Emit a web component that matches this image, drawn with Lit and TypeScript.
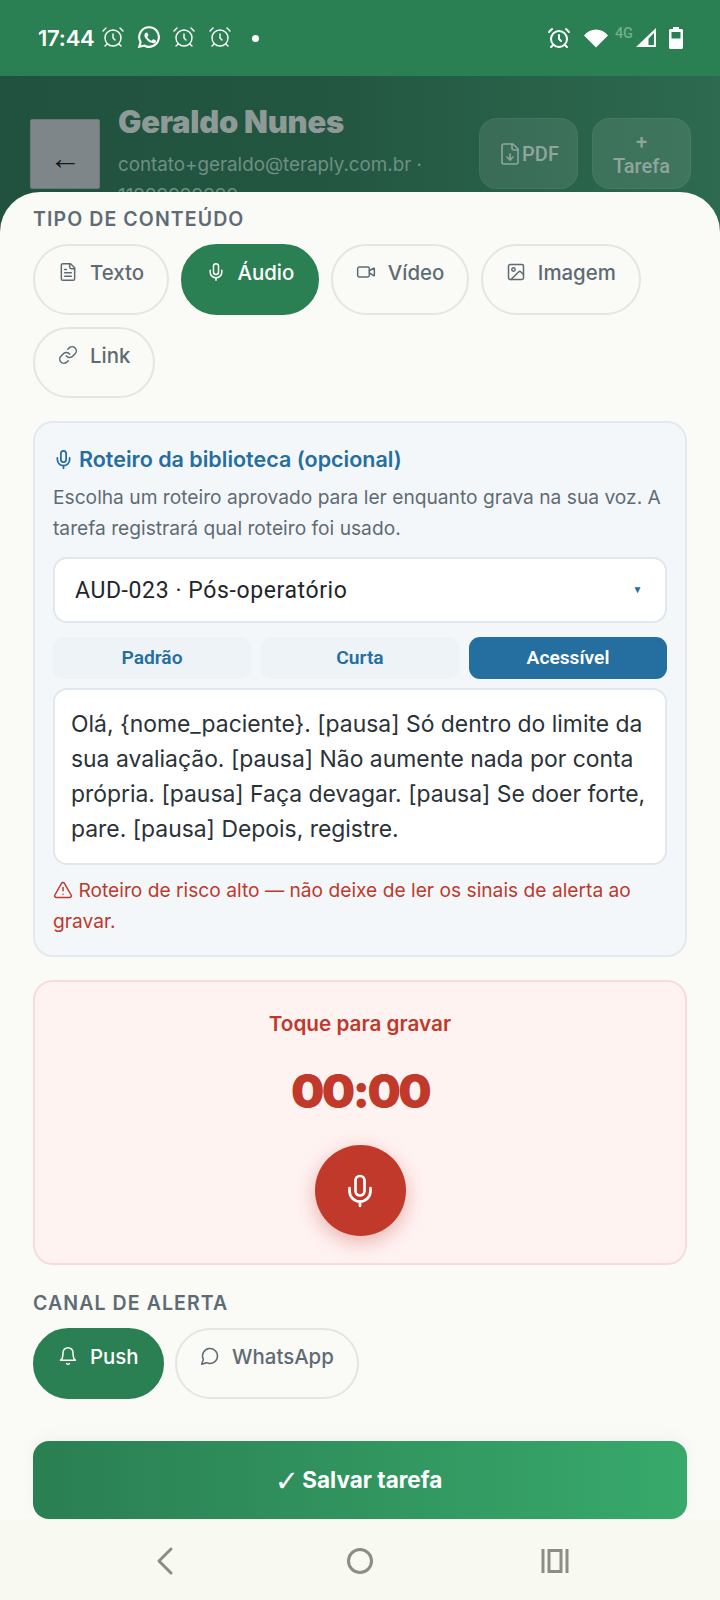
import { LitElement, html, css, svg } from "lit";
import { customElement } from "lit/decorators.js";

const ic = {
  file: svg`<path d="M15 2H6a2 2 0 0 0-2 2v16a2 2 0 0 0 2 2h12a2 2 0 0 0 2-2V7Z"/><path d="M14 2v4a2 2 0 0 0 2 2h4"/><path d="M10 9H8"/><path d="M16 13H8"/><path d="M16 17H8"/>`,
  mic: svg`<path d="M12 2a3 3 0 0 0-3 3v7a3 3 0 0 0 6 0V5a3 3 0 0 0-3-3Z"/><path d="M19 10v2a7 7 0 0 1-14 0v-2"/><line x1="12" x2="12" y1="19" y2="22"/>`,
  video: svg`<path d="m16 13 5.223 3.482a.5.5 0 0 0 .777-.416V7.87a.5.5 0 0 0-.752-.432L16 10.5"/><rect x="2" y="6" width="14" height="12" rx="2"/>`,
  image: svg`<rect width="18" height="18" x="3" y="3" rx="2"/><circle cx="9" cy="9" r="2"/><path d="m21 15-3.086-3.086a2 2 0 0 0-2.828 0L6 21"/>`,
  link: svg`<path d="M10 13a5 5 0 0 0 7.54.54l3-3a5 5 0 0 0-7.07-7.07l-1.72 1.71"/><path d="M14 11a5 5 0 0 0-7.54-.54l-3 3a5 5 0 0 0 7.07 7.07l1.71-1.71"/>`,
  bell: svg`<path d="M6 8a6 6 0 0 1 12 0c0 7 3 9 3 9H3s3-2 3-9"/><path d="M10.3 21a1.94 1.94 0 0 0 3.4 0"/>`,
  msg: svg`<path d="M7.9 20A9 9 0 1 0 4 16.1L2 22Z"/>`,
  warn: svg`<path d="m21.73 18-8-14a2 2 0 0 0-3.48 0l-8 14A2 2 0 0 0 4 21h16a2 2 0 0 0 1.73-3"/><path d="M12 9v4"/><path d="M12 17h.01"/>`,
  pdf: svg`<path d="M15 2H6a2 2 0 0 0-2 2v16a2 2 0 0 0 2 2h12a2 2 0 0 0 2-2V7Z"/><path d="M14 2v4a2 2 0 0 0 2 2h4"/><path d="M12 18v-6"/><path d="m9 15 3 3 3-3"/>`,
  alarm: svg`<circle cx="12" cy="13" r="8"/><path d="M12 9v4l2 2"/><path d="M5 3 2 6"/><path d="m22 6-3-3"/><path d="M6.38 18.7 4 21"/><path d="M17.64 18.67 20 21"/>`,
};

const icon = (p: unknown, cls: string) =>
  html`<svg class=${cls} viewBox="0 0 24 24" fill="none" stroke="currentColor" stroke-width="2" stroke-linecap="round" stroke-linejoin="round">${p}</svg>`;

@customElement("app-root")
export class AppRoot extends LitElement {
  static styles = css`
    :host { display: flex; flex-direction: column; width: 720px; height: 1600px; overflow: hidden; background: #fafaf7; font-family: Inter, "Liberation Sans", sans-serif; }
    * { box-sizing: border-box; }
    .status { height: 76px; flex: none; background: #2a7f53; color: #fff; display: flex; align-items: flex-start; padding: 25px 37px 0 38px; }
    .time { font: 600 22px/26px Inter, sans-serif; letter-spacing: -0.2px; margin-right: 6px; }
    .st-ic { width: 24px; height: 24px; margin-right: 12px; }
    .st-ic.thin { stroke-width: 1.4; }
    .wa { width: 24px; height: 24px; margin-right: 11px; }
    .dot { width: 7px; height: 7px; border-radius: 50%; background: #fff; margin: 10px 0 0 8px; }
    .st-right { margin-left: auto; display: flex; align-items: flex-start; }
    .st-right .ralarm { width: 24px; height: 24px; margin: 1px 12px 0 0; stroke-width: 2; }
    .wifi { width: 26px; height: 22px; margin: 2px 6px 0 0; }
    .g4 { font: 500 14.5px/16px Roboto, sans-serif; color: #6fb08f; margin: 1px 3px 0 0; }
    .sig { width: 21px; height: 21px; margin: 2px 12px 0 0; }
    .bat { width: 14px; height: 22px; margin-top: 2px; }

    .head { height: 156px; flex: none; background: linear-gradient(90deg, #20523f 0%, #235641 45%, #2d6a4f 100%); display: flex; align-items: flex-start; padding: 43px 29px 0 30px; overflow: hidden; }
    .back { width: 70px; height: 70px; flex: none; background: #7f8689; border: 1px solid #6d7679; border-radius: 2px; color: #15191b; font: 400 32px/1 "Liberation Sans", sans-serif; display: flex; align-items: flex-end; justify-content: center; padding-bottom: 14px; box-sizing: border-box; }
    .who { width: 340px; flex: none; margin: -17px 0 0 18px; }
    .name { font: 900 31px/40px Inter, sans-serif; letter-spacing: -0.25px; color: #8e9a98; }
    .mail { font: 400 18.8px/31px Inter, sans-serif; color: #6f8f84; margin-top: 7px; white-space: normal; }
    .hbtns { margin-left: auto; display: flex; gap: 14px; margin-top: -1px; }
    .hbtn { width: 99px; height: 71px; border-radius: 18px; background: rgba(255,255,255,.09); border: 1px solid rgba(255,255,255,.05); color: #8fa59d; font: 500 20px/24px Roboto, sans-serif; display: flex; align-items: center; justify-content: center; text-align: center; gap: 0; }
    .hbtn svg { width: 24px; height: 24px; stroke-width: 1.6; }

    .sheet { flex: 1; min-height: 0; background: #fafaf7; border-radius: 40px 40px 0 0; margin-top: -40px; position: relative; padding: 14px 33px 0; display: flex; flex-direction: column; overflow: hidden; }
    .label { font: 600 19.5px/26px Inter, sans-serif; letter-spacing: 1.1px; color: #5f6b73; }
    .chips { display: flex; flex-wrap: wrap; gap: 12px 11.5px; margin-top: 12px; }
    .chip { height: 71px; border-radius: 36px; border: 2px solid #e2e6e4; color: #5f6b73; font: 500 20.4px/28px Inter, sans-serif; display: flex; align-items: flex-start; padding: 13px 23px 0; gap: 12px; }
    .chip svg { width: 20px; height: 20px; margin-top: 3px; stroke-width: 1.8; }
    .chip.on { background: #2a7f53; border-color: #2a7f53; color: #fff; }

    .card { margin-top: 23px; height: 536px; border-radius: 20px; background: #f4f7fa; border: 2px solid #e3e9ee; padding: 22px 18px 0; }
    .ctitle { display: flex; align-items: center; gap: 5px; font: 600 21.5px/28px Inter, sans-serif; color: #256ea0; }
    .ctitle svg { width: 21px; height: 21px; }
    .desc { font: 400 19.2px/31px Inter, sans-serif; color: #5f6b73; margin-top: 9px; }
    .select { height: 66px; margin-top: 13px; background: #fff; border: 2px solid #e1e7ef; border-radius: 14px; display: flex; align-items: center; justify-content: space-between; padding: 2px 22px 0 20px; font: 400 23px/28px Roboto, sans-serif; letter-spacing: .6px; color: #1f262b; }
    .caret { font-size: 10px; color: #256ea0; margin-top: -2px; }
    .tabs { display: flex; gap: 10px; margin-top: 14px; }
    .tab { flex: 1; height: 42px; border-radius: 11px; background: #eef3f8; color: #256ea0; font: 600 19.2px/42px Roboto, sans-serif; text-align: center; }
    .tab.on { background: #256ea0; color: #fff; }
    .area { height: 177px; margin-top: 9px; background: #fff; border: 2px solid #e1e7ef; border-radius: 14px; padding: 17px 16px; font: 400 22.9px/35px Inter, sans-serif; color: #2a3238; }
    .warn { font: 400 19.2px/31px Inter, sans-serif; color: #c0392b; margin-top: 10px; }
    .warn svg { width: 20px; height: 20px; vertical-align: -3px; stroke-width: 1.8; }

    .rec { margin-top: 23px; height: 285px; background: #fff3f2; border: 2px solid #f8dcdc; border-radius: 20px; display: flex; flex-direction: column; align-items: center; padding-top: 27px; color: #c0392b; }
    .rt { font: 600 20.7px/30px Inter, sans-serif; }
    .timer { font: 900 47px/60px Inter, sans-serif; letter-spacing: -2.6px; margin-top: 22px; }
    .micbtn { width: 91px; height: 91px; border-radius: 50%; background: #c0392b; color: #fff; display: flex; align-items: center; justify-content: center; margin-top: 24px; box-shadow: 0 6px 20px rgba(192,57,43,.35); }
    .micbtn svg { width: 36px; height: 36px; stroke-width: 1.8; }
    .label.l2 { margin-top: 25px; }
    .spacer { flex: 1; }
    .save { height: 78px; flex: none; border-radius: 16px; background: linear-gradient(90deg, #2a7f53, #38a96b); color: #fff; font: 700 22.5px/78px Inter, sans-serif; text-align: center; padding-right: 3px; box-shadow: 0 -4px 16px rgba(0,0,0,.04); }
    .check { font: 700 29px/1 "DejaVu Sans", sans-serif; vertical-align: -3px; margin-right: -2px; }
    .nav { height: 81px; flex: none; background: #f8f9f1; display: flex; color: #8d8d88; padding: 0 67px; position: relative; }
    .nav > div { flex: 1; display: flex; align-items: flex-start; justify-content: center; padding-top: 22px; }
    .nav svg { width: 40px; height: 40px; }
  `;

  chip(i: unknown, t: string, on = false) {
    return html`<div class="chip ${on ? "on" : ""}">${icon(i, "")}<span>${t}</span></div>`;
  }

  render() {
    const alarm = icon(ic.alarm, "st-ic thin");
    return html`
      <div class="status">
        <span class="time">17:44</span>
        ${alarm}
        <svg class="wa" viewBox="0 0 24 24"><path fill="none" stroke="#fff" stroke-width="2.1" d="M12 2.2a9.8 9.8 0 0 0-8.4 14.8L2.2 21.8l5-1.3A9.8 9.8 0 1 0 12 2.2z"/><path fill="#fff" d="M8.6 6.9c-.3 0-.7.1-1 .5-.4.4-1.3 1.200-1.300 2.900s1.300 3.400 1.500 3.600c.2.200 2.500 3.900 6.100 5.300 3 1.200 3.600.900 4.200.900.7-.100 2.100-.9 2.400-1.700.300-.8.300-1.500.200-1.700-.100-.100-.300-.2-.7-.4l-2.400-1.200c-.3-.1-.6-.2-.8.200l-1.100 1.400c-.2.200-.4.300-.8.100-.4-.2-1.500-.6-2.900-1.800-1.100-1-1.800-2.100-2-2.500-.2-.4 0-.6.200-.800l.6-.7c.2-.2.200-.4.400-.6.100-.3 0-.5 0-.7l-1.100-2.600c-.3-.7-.6-.6-.8-.6z" transform="translate(2.400 2.200) scale(.8)"/></svg>
        ${alarm}${alarm}
        <span class="dot"></span>
        <div class="st-right">
          ${icon(ic.alarm, "ralarm")}
          <svg class="wifi" viewBox="0 0 26 22"><path fill="#fff" d="M13 20.500 1 8.500C4 4.500 8.300 2.500 13 2.500s9 2 12 6z"/></svg>
          <span class="g4">4G</span>
          <svg class="sig" viewBox="0 0 21 21"><path fill="#fff" d="M20 1v19H0zM18 6 12.500 11.500V18H18z" fill-rule="evenodd"/></svg>
          <svg class="bat" viewBox="0 0 14 22"><path fill="#fff" fill-rule="evenodd" d="M4 0h6v2h2.500c.8 0 1.500.7 1.500 1.500V20.500c0 .8-.7 1.500-1.500 1.500h-11C.7 22 0 21.300 0 20.500V3.500C0 2.700.7 2 1.500 2H4zM2.500 5v6.500h9V5z"/></svg>
        </div>
      </div>

      <div class="head">
        <div class="back">←</div>
        <div class="who">
          <div class="name">Geraldo Nunes</div>
          <div class="mail">contato+geraldo@teraply.com.br · 11999999999</div>
        </div>
        <div class="hbtns">
          <div class="hbtn">${icon(ic.pdf, "")}PDF</div>
          <div class="hbtn">+<br />Tarefa</div>
        </div>
      </div>

      <div class="sheet">
        <div class="label">TIPO DE CONTEÚDO</div>
        <div class="chips">
          ${this.chip(ic.file, "Texto")}
          ${this.chip(ic.mic, "Áudio", true)}
          ${this.chip(ic.video, "Vídeo")}
          ${this.chip(ic.image, "Imagem")}
          ${this.chip(ic.link, "Link")}
        </div>

        <div class="card">
          <div class="ctitle">${icon(ic.mic, "")}Roteiro da biblioteca (opcional)</div>
          <div class="desc">Escolha um roteiro aprovado para ler enquanto grava na sua voz. A tarefa registrará qual roteiro foi usado.</div>
          <div class="select"><span>AUD-023 · Pós-operatório</span><span class="caret">▼</span></div>
          <div class="tabs">
            <div class="tab">Padrão</div>
            <div class="tab">Curta</div>
            <div class="tab on">Acessível</div>
          </div>
          <div class="area">Olá, {nome_paciente}. [pausa] Só dentro do limite da sua avaliação. [pausa] Não aumente nada por conta própria. [pausa] Faça devagar. [pausa] Se doer forte, pare. [pausa] Depois, registre.</div>
          <div class="warn">${icon(ic.warn, "")} Roteiro de risco alto — não deixe de ler os sinais de alerta ao gravar.</div>
        </div>

        <div class="rec">
          <div class="rt">Toque para gravar</div>
          <div class="timer">00:00</div>
          <div class="micbtn">${icon(ic.mic, "")}</div>
        </div>

        <div class="label l2">CANAL DE ALERTA</div>
        <div class="chips">
          ${this.chip(ic.bell, "Push", true)}
          ${this.chip(ic.msg, "WhatsApp")}
        </div>
        <div class="spacer"></div>
        <div class="save"><span class="check">✓</span> Salvar tarefa</div>
      </div>

      <div class="nav">
        <div><svg viewBox="0 0 40 40" fill="none" stroke="currentColor" stroke-width="3" stroke-linecap="round" stroke-linejoin="round"><path d="M26 8 14 20l12 12"/></svg></div>
        <div><svg viewBox="0 0 40 40" fill="none" stroke="currentColor" stroke-width="3"><circle cx="20" cy="20" r="11.500"/></svg></div>
        <div><svg viewBox="0 0 40 40" fill="none" stroke="currentColor" stroke-width="3"><path d="M8 8v24M32 8v24"/><rect x="14" y="9.500" width="12" height="21"/></svg></div>
      </div>
    `;
  }
}
